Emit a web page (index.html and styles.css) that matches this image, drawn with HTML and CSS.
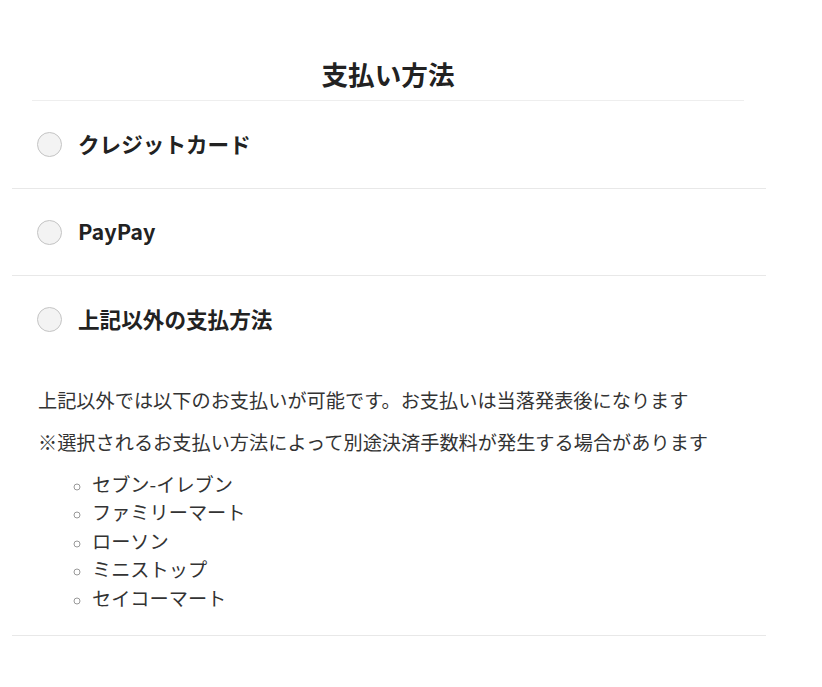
FILE: index.html
```html
<!DOCTYPE html>
<html lang="ja">
<head>
<meta charset="utf-8">
<title>支払い方法</title>
<link rel="stylesheet" href="styles.css">
</head>
<body>
<div class="page">
  <h2 class="title">支払い方法</h2>
  <div class="option">
    <div class="option-head">
      <span class="radio"></span>
      <span class="label">クレジットカード</span>
    </div>
  </div>
  <div class="option">
    <div class="option-head option-head-short">
      <span class="radio"></span>
      <span class="label">PayPay</span>
    </div>
  </div>
  <div class="option">
    <div class="option-head">
      <span class="radio"></span>
      <span class="label">上記以外の支払方法</span>
    </div>
    <div class="option-body">
      <p>上記以外では以下のお支払いが可能です。お支払いは当落発表後になります</p>
      <p>※選択されるお支払い方法によって別途決済手数料が発生する場合があります</p>
      <ul class="stores">
        <li>セブン-イレブン</li>
        <li>ファミリーマート</li>
        <li>ローソン</li>
        <li>ミニストップ</li>
        <li>セイコーマート</li>
      </ul>
    </div>
  </div>
</div>
</body>
</html>
```

FILE: styles.css
```css
html, body {
  margin: 0;
  padding: 0;
  background: #fff;
}
body {
  font-family: "Noto Sans CJK JP", "Noto Sans", sans-serif;
  color: #222;
}
.page {
  width: 754px;
  margin-left: 12px;
  padding-top: 55px;
}
.title {
  margin: 0 22px 0 20px;
  font-size: 26.6px;
  font-weight: 700;
  line-height: 38px;
  text-align: center;
  padding-bottom: 7px;
  border-bottom: 1px solid #eeeeee;
}
.option {
  border-bottom: 1px solid #e8e8e8;
}
.option-head {
  height: 87px;
  display: flex;
  align-items: center;
  padding-left: 25px;
  gap: 16px;
}
.option-head-short {
  height: 86px;
}
.radio {
  width: 23px;
  height: 23px;
  border-radius: 50%;
  border: 1px solid #c4c4c4;
  background: #f3f3f3;
}
.label {
  font-size: 21.6px;
  font-weight: 700;
  line-height: 28px;
  color: #222;
  margin-top: -2px;
}
.option-body {
  padding: 23px 0 23px 26px;
  font-size: 19.2px;
  line-height: 28.8px;
  color: #333;
}
.option-body p {
  margin: 0 0 13px;
}
.stores {
  margin: 0;
  padding-left: 54px;
  list-style: circle;
  line-height: 28.5px;
}
.stores li::marker {
  color: #999;
  font-size: 15px;
}
```
